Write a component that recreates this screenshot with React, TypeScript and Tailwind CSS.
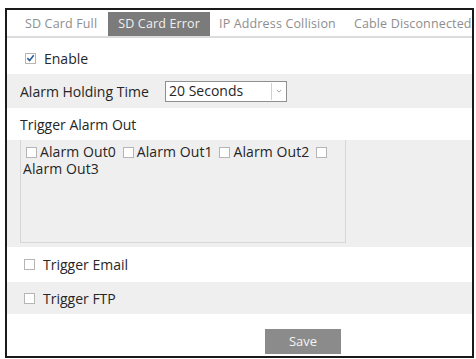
import React from "react";

const tabs = ["SD Card Full", "SD Card Error", "IP Address Collision", "Cable Disconnected"];

function Box({ checked }: { checked?: boolean }) {
  return (
    <span className="inline-flex h-[11px] w-[11px] shrink-0 items-center justify-center border border-[#b5b5b5] bg-white">
      {checked && (
        <svg viewBox="0 0 10 10" className="h-[10px] w-[10px]">
          <path d="M1.5 5.2 L4 7.8 L8.6 2" fill="none" stroke="#2c5f9e" strokeWidth="1.8" />
        </svg>
      )}
    </span>
  );
}

export default function App() {
  return (
    <div className="h-[359px] w-[476px] bg-white pl-[5px] pt-[8px] font-['Open_Sans',sans-serif] text-[#262626]">
      <div className="flex h-[350px] w-[469px] flex-col border-2 border-[#1a1a1a]">
        <div className="flex h-[28px] items-end border-b-2 border-[#dcdcdc] pl-[8px] text-[12.5px] tracking-[0.15px] text-[#8e8e8e]">
          {tabs.map((t, i) => (
            <div
              key={t}
              className={
                i === 1
                  ? "flex h-[24px] items-center whitespace-nowrap bg-[#7b7b7b] px-[10px] text-[#f0f0f0]"
                  : "flex h-[24px] items-center whitespace-nowrap px-[9px] first:pl-[10px] first:pr-[11px]"
              }
            >
              {t}
            </div>
          ))}
        </div>

        <div className="flex h-[36px] items-center gap-[8px] pl-[18px] pt-[4px] text-[14px]">
          <Box checked />
          <span>Enable</span>
        </div>

        <div className="flex h-[34px] items-center bg-[#efefef] pl-[13px] text-[14px]">
          <span className="w-[145px]">Alarm Holding Time</span>
          <div className="flex h-[21px] w-[122px] items-center border border-[#8f8f8f] bg-white">
            <span className="flex-1 pl-[3px] text-[14px] leading-none">20 Seconds</span>
            <span className="mr-[1px] flex h-[17px] w-[14px] items-center justify-center border-l border-[#d0d0d0]">
              <svg viewBox="0 0 8 5" className="h-[4px] w-[6px]">
                <path d="M1 1 L4 4 L7 1" fill="none" stroke="#9a9a9a" strokeWidth="1.2" />
              </svg>
            </span>
          </div>
        </div>

        <div className="flex h-[32px] items-center pl-[13px] text-[14px]">Trigger Alarm Out</div>

        <div className="flex h-[107px] bg-[#efefef] pb-[4px] pl-[13px]">
          <div className="w-[326px] border-x border-b border-[#d6d6d6] pl-[2px] pt-[4px] text-[14px] leading-[16px] tracking-[0.1px]">
            {["Alarm Out0", "Alarm Out1", "Alarm Out2", "Alarm Out3"].map((a, i) => (
              <React.Fragment key={a}>
                <span className="ml-[3px] mr-[3px] inline-block align-[-1px]">
                  <Box />
                </span>
                <span className="whitespace-nowrap">{a}</span>
                {i < 3 ? " " : ""}
              </React.Fragment>
            ))}
          </div>
        </div>

        <div className="flex h-[35px] items-center gap-[8px] pl-[17px] text-[14px]">
          <Box />
          <span>Trigger Email</span>
        </div>

        <div className="flex h-[32px] items-center gap-[8px] bg-[#efefef] pl-[17px] text-[14px]">
          <Box />
          <span>Trigger FTP</span>
        </div>

        <div className="flex flex-1 items-end pb-[2px] pl-[258px]">
          <button className="h-[25px] w-[76px] bg-[#8b8b8b] text-[13px] text-[#f4f4f4]">Save</button>
        </div>
      </div>
    </div>
  );
}
